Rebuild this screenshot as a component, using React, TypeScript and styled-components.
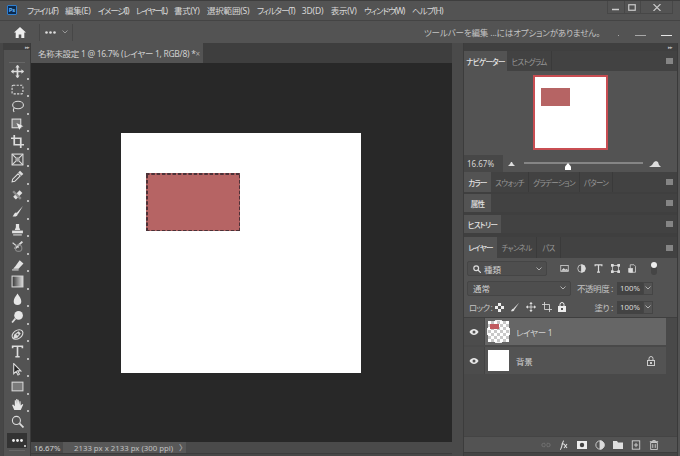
import React from 'react';
import styled, { createGlobalStyle } from 'styled-components';

const GlobalStyle = createGlobalStyle`
  html, body { margin: 0; padding: 0; background: #535353; }
  * { box-sizing: border-box; }
`;

const Window = styled.div`
  width: 680px;
  height: 456px;
  display: flex;
  flex-direction: column;
  overflow: hidden;
  background: #535353;
  color: #d6d6d6;
  font-family: "Noto Sans", "Noto Sans CJK JP", sans-serif;
  font-size: 9px;
  font-feature-settings: "palt";
  white-space: nowrap;
`;

const MenuBar = styled.div`
  height: 20px;
  flex: none;
  display: flex;
  align-items: center;
  padding: 0 0 1px 7px;
  border-top: 1px solid #3e3e3e;
`;

const PsLogo = styled.div`
  width: 10px;
  height: 10px;
  margin-right: 10px;
  background: #0c2a4d;
  border: 1px solid #2f7fd0;
  border-radius: 1px;
  color: #5cb4ff;
  font-size: 6px;
  font-weight: 700;
  line-height: 8px;
  text-align: center;
`;

const MenuItem = styled.span<{ $ls: number }>`
  margin-right: 7.5px;
  color: #d8d8d8;
  font-size: 8.5px;
  letter-spacing: ${(p) => p.$ls}px;
`;

const WindowButtons = styled.div`
  margin: 0 7px auto auto;
  width: 66px;
  height: 13px;
  display: flex;
  border-bottom: 1px solid #474747;
  border-left: 1px solid #474747;
  border-right: 1px solid #474747;
`;

const WindowButton = styled.div<{ $wide?: boolean }>`
  width: ${(p) => (p.$wide ? 32 : 17)}px;
  display: flex;
  align-items: center;
  justify-content: center;
  border-right: ${(p) => (p.$wide ? 'none' : '1px solid #474747')};
`;

const OptionBar = styled.div`
  height: 23px;
  flex: none;
  display: flex;
  align-items: center;
  border-top: 1px solid #444;
  color: #c8c8c8;
`;

const OptionCell = styled.div<{ $w: number }>`
  width: ${(p) => p.$w}px;
  height: 17px;
  display: flex;
  align-items: center;
  justify-content: center;
  gap: 6px;
  border-right: 1px solid #474747;
`;

const OptionHint = styled.div`
  margin-left: 351px;
  font-size: 8.5px;
  letter-spacing: -0.15px;
  color: #c4c4c4;
`;

const OptionMarks = styled.div`
  margin-left: auto;
  margin-right: 8px;
  width: 54px;
  height: 7px;
  display: flex;
  align-items: flex-end;
  justify-content: space-between;
`;

const Mark = styled.i<{ $w: number; $bright?: boolean }>`
  display: block;
  width: ${(p) => p.$w}px;
  height: 1px;
  background: ${(p) => (p.$bright ? '#e6e6e6' : '#a8a8a8')};
`;

const Workspace = styled.div`
  flex: 1;
  min-height: 0;
  display: flex;
  padding-right: 2px;
`;

const Toolbar = styled.div`
  width: 31px;
  flex: none;
  display: flex;
  flex-direction: column;
  align-items: stretch;
  padding-left: 3px;
  background: #474747;
  border-right: 1px solid #3a3a3a;
`;

const ToolbarInner = styled.div`
  flex: 1;
  display: flex;
  flex-direction: column;
  align-items: center;
  background: #535353;
  border-left: 1px solid #444;
`;

const CollapseBar = styled.div`
  width: 100%;
  height: 7px;
  flex: none;
  display: flex;
  justify-content: flex-end;
  align-items: center;
  padding-right: 1px;
  background: #3f3f3f;
  color: #bbb;
  font-size: 5px;
  letter-spacing: -1px;
`;

const ToolGrip = styled.div<{ $h: number }>`
  width: 16px;
  height: ${(p) => p.$h}px;
  flex: none;
  border-bottom: 1px solid #666;
`;

const Tool = styled.div`
  position: relative;
  width: 25px;
  height: 17.5px;
  flex: none;
  display: flex;
  align-items: center;
  justify-content: center;
`;

const Corner = styled.i`
  position: absolute;
  right: 1px;
  bottom: 1px;
  width: 2px;
  height: 2px;
  background: #b8b8b8;
`;

const MoreTool = styled(Tool)`
  width: 20px;
  height: 15px;
  margin-top: 2px;
  background: #333;
  color: #eee;
`;

const DocArea = styled.div`
  width: 421px;
  flex: none;
  display: flex;
  flex-direction: column;
  background: #282828;
`;

const DocTabs = styled.div`
  height: 20px;
  flex: none;
  display: flex;
  background: #3e3e3e;
`;

const DocTab = styled.div`
  width: 172px;
  display: flex;
  align-items: center;
  justify-content: space-between;
  padding: 0 6px 0 7px;
  background: #535353;
  color: #d0d0d0;
  font-size: 8.5px;
  letter-spacing: -0.3px;
`;

const TabClose = styled.span`
  color: #aaa;
  font-size: 8px;
`;

const Canvas = styled.div`
  flex: 1;
  min-height: 0;
  display: flex;
  align-items: center;
  justify-content: center;
  padding: 1px 1px 0 0;
`;

const Artboard = styled.div`
  width: 240px;
  height: 240px;
  padding: 40px 0 0 25px;
  background: #fff;
`;

const Selection = styled.div`
  width: 94px;
  height: 58px;
  background:
    linear-gradient(90deg, #4d3238 60%, transparent 0) 0 0 / 5.3px 1.5px repeat-x,
    linear-gradient(90deg, #4d3238 60%, transparent 0) 0 100% / 5.3px 1.5px repeat-x,
    linear-gradient(0deg, #4d3238 60%, transparent 0) 0 0 / 1.5px 5.3px repeat-y,
    linear-gradient(0deg, #4d3238 60%, transparent 0) 100% 0 / 1.5px 5.3px repeat-y,
    #b66464;
`;

const StatusBar = styled.div`
  height: 11px;
  flex: none;
  display: flex;
  align-items: center;
  background: #4a4a4a;
  color: #c0c0c0;
  font-size: 7.8px;
`;

const StatusZoom = styled.div`
  width: 32px;
  height: 100%;
  display: flex;
  align-items: center;
  padding-left: 3px;
  color: #d0d0d0;
`;

const StatusInfo = styled.div`
  width: 123px;
  height: 100%;
  padding: 0 3px 0 11px;
  display: flex;
  align-items: center;
  justify-content: space-between;
  background: #585858;
`;

const WindowEdge = styled.div`
  height: 3px;
  flex: none;
  background: #474747;
  border-top: 1px solid #3c3c3c;
`;

const DocGutter = styled.div`
  width: 12px;
  flex: none;
  background: #4a4a4a;
  border-right: 1px solid #3c3c3c;
`;

const Dock = styled.div`
  flex: 1;
  min-width: 0;
  display: flex;
  flex-direction: column;
  background: #3f3f3f;
  border-right: 1px solid #3a3a3a;
`;

const DockCollapse = styled(CollapseBar)`
  height: 8px;
  padding-right: 5px;
  background: #3f3f3f;
`;

const PanelTabs = styled.div<{ $h?: number }>`
  height: ${(p) => p.$h ?? 20}px;
  flex: none;
  display: flex;
  align-items: stretch;
  background: #424242;
`;

const PanelTab = styled.div<{ $active?: boolean; $w: number }>`
  width: ${(p) => p.$w}px;
  display: flex;
  align-items: center;
  justify-content: center;
  font-size: 7.5px;
  letter-spacing: -0.7px;
  font-weight: ${(p) => (p.$active ? 500 : 400)};
  background: ${(p) => (p.$active ? '#535353' : 'transparent')};
  color: ${(p) => (p.$active ? '#e2e2e2' : '#969696')};
  border-right: ${(p) => (p.$active ? 'none' : '1px solid #3a3a3a')};
`;

const PanelMenu = styled.i`
  margin: auto 4px auto auto;
  width: 7px;
  height: 6px;
  background: #858585;
`;

const NavigatorBody = styled.div`
  height: 84px;
  flex: none;
  display: flex;
  align-items: center;
  justify-content: center;
  background: #535353;
  padding: 0 1px 1px 0;
`;

const Preview = styled.div`
  width: 75px;
  height: 75px;
  padding: 11px 0 0 6px;
  background: #fff;
  border: 2px solid #c84d52;
`;

const PreviewRect = styled.div`
  width: 29px;
  height: 18px;
  background: #b66464;
`;

const ZoomRow = styled.div`
  height: 17px;
  flex: none;
  display: flex;
  align-items: center;
  background: #535353;
`;

const ZoomValue = styled.div`
  width: 39px;
  height: 100%;
  display: flex;
  align-items: center;
  padding-left: 3px;
  background: #474747;
  color: #d4d4d4;
  font-size: 8px;
`;

const MountainSmall = styled.svg`
  margin-left: 5px;
`;

const Track = styled.div`
  position: relative;
  width: 119px;
  height: 2px;
  margin: 0 6px 2px 9px;
  background: #858585;
`;

const Thumb = styled.svg`
  position: absolute;
  left: 40px;
  top: 1px;
`;

const Gap = styled.div<{ $h: number }>`
  height: ${(p) => p.$h}px;
  flex: none;
`;

const LayersPanel = styled.div`
  flex: 1;
  min-height: 0;
  display: flex;
  flex-direction: column;
  background: #535353;
`;

const PanelRow = styled.div<{ $h: number }>`
  height: ${(p) => p.$h}px;
  flex: none;
  display: flex;
  align-items: center;
  padding-left: 3px;
`;

const Field = styled.div<{ $w: number }>`
  width: ${(p) => p.$w}px;
  height: 15px;
  flex: none;
  display: flex;
  align-items: center;
  justify-content: space-between;
  gap: 3px;
  padding: 0 4px 0 5px;
  border: 1px solid #454545;
  border-radius: 2px;
  background: #4e4e4e;
  color: #d0d0d0;
  font-size: 8.5px;
`;

const FilterLabel = styled.span`
  display: flex;
  align-items: center;
  gap: 3px;
`;

const FilterIcons = styled.div`
  display: flex;
  align-items: center;
  gap: 8px;
  margin-left: 13px;
`;

const Toggle = styled.svg`
  margin-left: 5px;
`;

const RowLabel = styled.span`
  color: #c4c4c4;
  font-size: 8.5px;
  letter-spacing: -0.4px;
`;

const OpacityLabel = styled(RowLabel)`
  margin: 0 4px 0 auto;
`;

const NumberBox = styled.div`
  width: 26px;
  height: 13px;
  flex: none;
  display: flex;
  align-items: center;
  justify-content: center;
  background: #434343;
  font-size: 7.8px;
  color: #dadada;
`;

const NumberCaret = styled.div`
  width: 10px;
  height: 13px;
  flex: none;
  display: flex;
  align-items: center;
  justify-content: center;
  border: 1px solid #454545;
  margin-right: 24px;
`;

const LockLabel = styled(RowLabel)`
  margin-left: 2px;
  letter-spacing: -0.8px;
`;

const LockIcons = styled.div`
  display: flex;
  align-items: center;
  gap: 6px;
  margin-left: 3px;
`;

const LayerList = styled.div`
  flex: 1;
  min-height: 0;
  display: flex;
  flex-direction: column;
  gap: 2px;
  padding-right: 11px;
  border-top: 1px solid #3f3f3f;
  background: #494949;
`;

const LayerRow = styled.div<{ $selected?: boolean }>`
  height: 27px;
  flex: none;
  display: flex;
  align-items: center;
  background: ${(p) => (p.$selected ? '#666' : '#535353')};
`;

const EyeCell = styled.div`
  width: 21px;
  height: 100%;
  flex: none;
  display: flex;
  align-items: center;
  justify-content: center;
  background: #4c4c4c;
  border-right: 1px solid #444;
`;

const ThumbFrame = styled.div`
  position: relative;
  width: 21px;
  height: 21px;
  flex: none;
  margin: 0 7px 0 3px;
  background: #fff;
`;

const CheckerThumb = styled(ThumbFrame)`
  padding: 3px 0 0 2px;
  background: repeating-conic-gradient(#c8c8c8 0 25%, #fff 0 50%) 0 0 / 6px 6px;
  &::after {
    content: '';
    position: absolute;
    inset: -1px;
    border: 1px solid #eee;
    clip-path: polygon(0 0, 35% 0, 35% 12%, 12% 12%, 12% 35%, 0 35%, 0 65%, 12% 65%, 12% 88%, 35% 88%, 35% 100%, 65% 100%, 65% 88%, 88% 88%, 88% 65%, 100% 65%, 100% 35%, 88% 35%, 88% 12%, 65% 12%, 65% 0);
  }
`;

const ThumbRect = styled.div`
  width: 9px;
  height: 5px;
  background: #c05a5f;
`;

const LayerName = styled.span`
  color: #d0d0d0;
  font-size: 8.5px;
  letter-spacing: -0.3px;
`;

const LayerLock = styled.div`
  margin-left: auto;
  margin-right: 11px;
  display: flex;
`;

const PanelFooter = styled.div`
  height: 16px;
  flex: none;
  display: flex;
  align-items: center;
  justify-content: flex-end;
  gap: 8px;
  padding-right: 18px;
  border-top: 1px solid #444;
  background: #535353;
`;

const Bottom = styled.div`
  height: 4px;
  flex: none;
  background: #444;
  border-top: 1px solid #3c3c3c;
`;

const Ico: React.FC<{ s?: number; children: React.ReactNode }> = ({ s = 13, children }) => (
  <svg width={s} height={s} viewBox="0 0 12 12" fill="none" stroke="#dcdcdc" strokeWidth="1">
    {children}
  </svg>
);

const toolIcons: React.ReactNode[] = [
  <><path d="M6 .5v11M.5 6h11" strokeWidth="1.6" /><path d="M6 0l2 2.4H4zM6 12l2-2.4H4zM0 6l2.4-2v4zM12 6L9.6 4v4z" fill="#dcdcdc" stroke="none" /></>,
  <rect x="1" y="2" width="10" height="8" rx="1" strokeDasharray="2 1.2" />,
  <><ellipse cx="6.5" cy="4.6" rx="5" ry="3.4" /><path d="M3 7.5c-1 1-1.2 2.3 0 3.5" /></>,
  <><rect x="1" y="1" width="8" height="8" fill="#777" /><path d="M5 4.500l6.500 3-2.800.8-.9 2.800z" fill="#eee" stroke="none" /></>,
  <><path d="M3 0v9h9" strokeWidth="1.6" /><path d="M0 3h9v9" strokeWidth="1.6" /></>,
  <><rect x="1" y="1" width="10" height="10" /><path d="M1 1l10 10M11 1L1 11" /><circle cx="6" cy="6" r="2" fill="#aaa" stroke="none" /></>,
  <><path d="M7.500 1.500l3 3" strokeWidth="2.400" /><path d="M6.500 3.500l2 2L3.500 10.500l-2.500.5.500-2.500z" /></>,
  <><path d="M2 8l6-6 2.500 2.500-6 6z" fill="#e2e2e2" stroke="none" /><path d="M2 3l7 7" strokeWidth="2.200" stroke="#8d8d8d" /></>,
  <><path d="M11 1L6 6.500l-1 1 1 1 1-1z" fill="#e2e2e2" stroke="none" /><path d="M5 7c-2 0-2 2-3.500 3.500C4 11 6 10.500 6.200 8.500z" fill="#e2e2e2" stroke="none" /></>,
  <><path d="M4.500 1h3v3l1 2.500h-5l1-2.500z" fill="#e2e2e2" stroke="none" /><path d="M1 7h10v2.500H1z" fill="#e2e2e2" stroke="none" /><path d="M2 11h8" /></>,
  <><path d="M10.500 1.500L3.500 8" strokeWidth="1.800" /><path d="M1.500 2.500L7 7" strokeWidth="1" /><circle cx="7" cy="7.500" r="3" stroke="#888" /></>,
  <><path d="M4 7.500L8 2l3.500 3-4.500 5H2z" fill="#e2e2e2" stroke="none" /><path d="M1 11h6" /></>,
  <><defs><linearGradient id="grad" x1="0" x2="1"><stop offset="0" stopColor="#333" /><stop offset="1" stopColor="#ddd" /></linearGradient></defs><rect x="1" y="1" width="10" height="10" fill="url(#grad)" stroke="#d6d6d6" /></>,
  <path d="M6 .5C7.500 3 9.500 5 9.500 7.500a3.500 3.500 0 0 1-7 0C2.500 5 4.500 3 6 .5z" fill="#e6e6e6" stroke="none" />,
  <><circle cx="7" cy="5" r="4" fill="#e6e6e6" stroke="none" /><path d="M4 8l-3 3.500" strokeWidth="1.600" /></>,
  <><ellipse cx="6" cy="6" rx="5.500" ry="3.800" transform="rotate(-35 6 6)" /><path d="M2 10l1-4 4-3 2 2-3 4z" fill="#dcdcdc" stroke="none" /><circle cx="6" cy="6" r="1" fill="#535353" stroke="none" /></>,
  <path d="M1.500 3V1.200h9V3M6 1.200v9.600M4 10.800h4" strokeWidth="1.500" />,
  <path d="M2.500 .5v9.500l2.300-2.200L6.500 11l1.300-.7-1.700-3h3z" fill="#262626" stroke="#dcdcdc" />,
  <rect x="1" y="2" width="10" height="8" fill="#7a7a7a" stroke="#d6d6d6" />,
  <path d="M3 11L1 6.500l1-.5 1.500 1.500V2l1 0 .300 3.500V1h1l.200 4.500V1.500h1L7.800 6V3h1L9 7l1.500-1.500.8.500L9 11z" fill="#e6e6e6" stroke="none" />,
  <><circle cx="5" cy="5" r="3.700" /><path d="M7.800 7.800L11.500 11.500" strokeWidth="1.600" /></>,
];

const MENUS: [string, number][] = [
  ['ファイル(F)', -1.2],
  ['編集(E)', -0.3],
  ['イメージ(I)', -1.3],
  ['レイヤー(L)', -1.4],
  ['書式(Y)', -0.3],
  ['選択範囲(S)', -0.2],
  ['フィルター(T)', -1.2],
  ['3D(D)', -0.2],
  ['表示(V)', -0.3],
  ['ウィンドウ(W)', -1.1],
  ['ヘルプ(H)', -0.8],
];

const Eye = () => (
  <Ico s={10}>
    <path d="M.5 6C2 3.500 4 2.500 6 2.500s4 1 5.500 3.500C10 8.500 8 9.500 6 9.500S2 8.500.5 6z" fill="#e8e8e8" stroke="none" />
    <circle cx="6" cy="6" r="1.800" fill="#535353" stroke="none" />
  </Ico>
);

const Chevron = ({ c = '#b0b0b0' }: { c?: string }) => (
  <svg width="6" height="4" viewBox="0 0 6 4" fill="none" stroke={c}>
    <path d="M.5 .5L3 3l2.500-2.500" />
  </svg>
);

const PanelBar: React.FC<{ tabs: [string, number][]; h?: number }> = ({ tabs, h }) => (
  <PanelTabs $h={h}>
    {tabs.map(([label, w], i) => (
      <PanelTab key={label} $w={w} $active={i === 0}>{label}</PanelTab>
    ))}
    <PanelMenu />
  </PanelTabs>
);

export default function App() {
  return (
    <Window>
      <GlobalStyle />
      <MenuBar>
        <PsLogo>Ps</PsLogo>
        {MENUS.map(([m, ls]) => <MenuItem key={m} $ls={ls}>{m}</MenuItem>)}
        <WindowButtons>
          <WindowButton>
            <svg width="7" height="7"><path d="M0 5.500h7" stroke="#ccc" strokeWidth="1.500" /></svg>
          </WindowButton>
          <WindowButton>
            <svg width="8" height="7"><rect x=".75" y=".75" width="6.500" height="5.500" stroke="#ccc" strokeWidth="1.200" fill="none" /></svg>
          </WindowButton>
          <WindowButton $wide>
            <svg width="8" height="7"><path d="M.5 0l7 7M7.500 0l-7 7" stroke="#ccc" strokeWidth="1.100" /></svg>
          </WindowButton>
        </WindowButtons>
      </MenuBar>
      <OptionBar>
        <OptionCell $w={40}>
          <svg width="12" height="11" viewBox="0 0 12 11"><path d="M6 0L0 5.500h1.700V11h3V7.500h2.600V11h3V5.500H12z" fill="#eee" /></svg>
        </OptionCell>
        <OptionCell $w={33}>
          <svg width="11" height="3"><circle cx="1.500" cy="1.500" r="1.300" fill="#ddd" /><circle cx="5.500" cy="1.500" r="1.300" fill="#ddd" /><circle cx="9.500" cy="1.500" r="1.300" fill="#ddd" /></svg>
          <Chevron c="#999" />
        </OptionCell>
        <OptionHint>ツールバーを編集 ...にはオプションがありません。</OptionHint>
        <OptionMarks>
          <Mark $w={1} />
          <Mark $w={11} />
          <Mark $w={11} $bright />
        </OptionMarks>
      </OptionBar>
      <Workspace>
        <Toolbar>
          <CollapseBar>▸▸</CollapseBar>
          <ToolbarInner>
            <ToolGrip $h={13} />
            {toolIcons.map((icon, i) => (
              <Tool key={i}>
                <Ico>{icon}</Ico>
                {i !== 20 && <Corner />}
              </Tool>
            ))}
            <MoreTool>
              <svg width="11" height="3"><circle cx="1.500" cy="1.500" r="1.400" fill="#eee" /><circle cx="5.500" cy="1.500" r="1.400" fill="#eee" /><circle cx="9.500" cy="1.500" r="1.400" fill="#eee" /></svg>
              <Corner />
            </MoreTool>
            <ToolGrip $h={3} />
          </ToolbarInner>
        </Toolbar>
        <DocArea>
          <DocTabs>
            <DocTab>
              <span>名称未設定 1 @ 16.7% (レイヤー 1, RGB/8) *</span>
              <TabClose>×</TabClose>
            </DocTab>
          </DocTabs>
          <Canvas>
            <Artboard>
              <Selection />
            </Artboard>
          </Canvas>
          <StatusBar>
            <StatusZoom>16.67%</StatusZoom>
            <StatusInfo>
              <span>2133 px x 2133 px (300 ppi)</span>
              <span>〉</span>
            </StatusInfo>
          </StatusBar>
          <WindowEdge />
        </DocArea>
        <DocGutter />
        <Dock>
          <DockCollapse>▸▸</DockCollapse>
          <PanelBar tabs={[['ナビゲーター', 43], ['ヒストグラム', 45]]} />
          <NavigatorBody>
            <Preview><PreviewRect /></Preview>
          </NavigatorBody>
          <ZoomRow>
            <ZoomValue>16.67%</ZoomValue>
            <MountainSmall width="7" height="4"><path d="M0 4l2-2 1-2 1 0 1 2 2 2z" fill="#ddd" /></MountainSmall>
            <Track>
              <Thumb width="8" height="7" viewBox="0 0 8 7"><path d="M4 0l3 3.500V7H1V3.500z" fill="#fff" /></Thumb>
            </Track>
            <svg width="12" height="6"><path d="M0 6l3-2 2-3 2-1 2 1 1 3 2 2z" fill="#ddd" /></svg>
          </ZoomRow>
          <PanelBar tabs={[['カラー', 27], ['スウォッチ', 38], ['グラデーション', 51], ['パターン', 33]]} />
          <Gap $h={2} />
          <PanelBar h={18} tabs={[['属性', 27]]} />
          <Gap $h={3} />
          <PanelBar h={18} tabs={[['ヒストリー', 37]]} />
          <Gap $h={4} />
          <PanelBar h={21} tabs={[['レイヤー', 33], ['チャンネル', 40], ['パス', 24]]} />
          <LayersPanel>
            <PanelRow $h={21}>
              <Field $w={80}>
                <FilterLabel>
                  <svg width="8" height="8" viewBox="0 0 8 8" fill="none" stroke="#ddd" strokeWidth="1.200"><circle cx="3.200" cy="3.200" r="2.400" /><path d="M5 5l3 3" /></svg>
                  種類
                </FilterLabel>
                <Chevron />
              </Field>
              <FilterIcons>
                <Ico s={9}><rect x="1" y="2" width="10" height="8" /><path d="M2 9l3-3 2 2 2-1 2 2" fill="#dcdcdc" /></Ico>
                <Ico s={9}><circle cx="6" cy="6" r="5" /><path d="M6 1a5 5 0 0 1 0 10z" fill="#dcdcdc" /></Ico>
                <Ico s={9}><path d="M1.500 3V1.200h9V3M6 1.200v9.600M4 10.800h4" strokeWidth="1.600" /></Ico>
                <Ico s={9}><rect x="2" y="2" width="8" height="8" /><rect x="0" y="0" width="3" height="3" fill="#dcdcdc" /><rect x="9" y="0" width="3" height="3" fill="#dcdcdc" /><rect x="0" y="9" width="3" height="3" fill="#dcdcdc" /><rect x="9" y="9" width="3" height="3" fill="#dcdcdc" /></Ico>
                <Ico s={9}><path d="M3 1h5l2 2v8H3z" /><rect x="1" y="6" width="5" height="5" fill="#dcdcdc" /></Ico>
                <Toggle width="8" height="15" viewBox="0 0 8 15">
                  <rect x="1" y="1" width="6" height="13" rx="3" fill="#454545" />
                  <circle cx="4" cy="4" r="3" fill="#eee" />
                </Toggle>
              </FilterIcons>
            </PanelRow>
            <PanelRow $h={18}>
              <Field $w={104}>
                <span>通常</span>
                <Chevron />
              </Field>
              <OpacityLabel>不透明度 :</OpacityLabel>
              <NumberBox>100%</NumberBox>
              <NumberCaret><Chevron /></NumberCaret>
            </PanelRow>
            <PanelRow $h={20}>
              <LockLabel>ロック :</LockLabel>
              <LockIcons>
                <svg width="9" height="9" viewBox="0 0 9 9"><rect width="9" height="9" fill="#eee" /><path d="M0 0h3v3H0zM6 0h3v3H6zM3 3h3v3H3zM0 6h3v3H0zM6 6h3v3H6z" fill="#555" /></svg>
                <Ico s={10}><path d="M11 1L5 7l-1 1 1 1 1-1 5-7z" fill="#e2e2e2" stroke="none" /><path d="M4 8c-2 0-2 2-3 3 2 .5 4 0 4.500-2z" fill="#e2e2e2" stroke="none" /></Ico>
                <Ico s={10}><path d="M6 .5v11M.5 6h11" /><path d="M6 0l2 2.400H4zM6 12l2-2.400H4zM0 6l2.400-2v4zM12 6L9.600 4v4z" fill="#dcdcdc" stroke="none" /></Ico>
                <Ico s={10}><path d="M3 0v9h9M0 3h9v9" /></Ico>
                <svg width="8" height="10" viewBox="0 0 8 10"><path d="M2 4V2.500a2 2 0 0 1 4 0V4" fill="none" stroke="#eee" /><rect y="4" width="8" height="6" fill="#eee" /><rect x="3" y="6" width="2" height="2" fill="#555" /></svg>
              </LockIcons>
              <OpacityLabel>塗り :</OpacityLabel>
              <NumberBox>100%</NumberBox>
              <NumberCaret><Chevron /></NumberCaret>
            </PanelRow>
            <LayerList>
              <LayerRow $selected>
                <EyeCell><Eye /></EyeCell>
                <CheckerThumb><ThumbRect /></CheckerThumb>
                <LayerName>レイヤー 1</LayerName>
              </LayerRow>
              <LayerRow>
                <EyeCell><Eye /></EyeCell>
                <ThumbFrame />
                <LayerName>背景</LayerName>
                <LayerLock>
                  <svg width="8" height="10" viewBox="0 0 8 10"><path d="M2 4V2.500a2 2 0 0 1 4 0V4" fill="none" stroke="#ccc" /><rect x=".5" y="4.500" width="7" height="5" fill="none" stroke="#ccc" /><rect x="3" y="6" width="2" height="2" fill="#ccc" /></svg>
                </LayerLock>
              </LayerRow>
            </LayerList>
            <PanelFooter>
              <Ico s={10}><path d="M5 4H3a2 2 0 0 0 0 4h2M7 4h2a2 2 0 0 1 0 4H7M4 6h4" stroke="#777" /></Ico>
              <svg width="10" height="10" viewBox="0 0 10 10" fill="none" stroke="#ddd" strokeWidth="1.100"><path d="M1 9.500C3 9.500 3 1 5 .7M2.500 4h2.500M5 4l3 4M8 4L5 8" /></svg>
              <svg width="10" height="8" viewBox="0 0 10 8"><rect width="10" height="8" fill="#eee" /><circle cx="5" cy="4" r="2.200" fill="#444" /></svg>
              <Ico s={10}><circle cx="6" cy="6" r="5" /><path d="M6 1a5 5 0 0 1 0 10z" fill="#dcdcdc" /></Ico>
              <svg width="10" height="8" viewBox="0 0 10 8"><path d="M0 0h4l1 1.500h5V8H0z" fill="#e0e0e0" /></svg>
              <Ico s={10}><rect x="1.500" y="1" width="9" height="10" /><path d="M6 3.500v5M3.500 6h5" /></Ico>
              <Ico s={10}><path d="M2 3h8v8.500H2zM1 2h10M4.500 2V.7h3V2M4.500 5v4.500M7.500 5v4.500" /></Ico>
            </PanelFooter>
            <Bottom />
          </LayersPanel>
        </Dock>
      </Workspace>
    </Window>
  );
}
